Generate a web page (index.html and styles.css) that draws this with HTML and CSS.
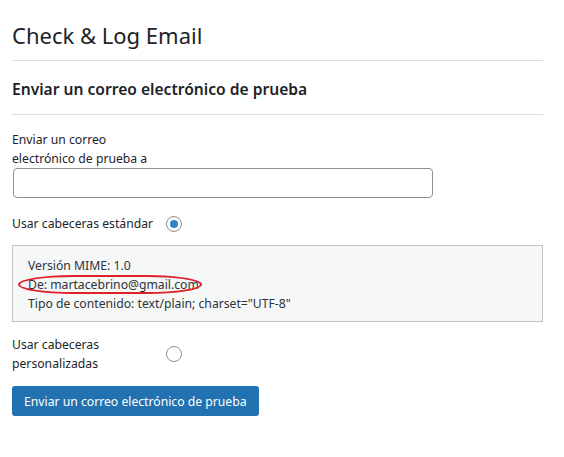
FILE: index.html
```html
<!DOCTYPE html>
<html lang="es">
<head>
    <meta charset="UTF-8">
    <title>Check &amp; Log Email</title>
    <link rel="stylesheet" href="styles.css">
</head>
<body>
    <div class="wrap">
        <h1 class="title">Check &amp; Log Email</h1>

        <h2 class="section-title">Enviar un correo electrónico de prueba</h2>

        <form class="test-form">
            <div class="field">
                <label for="sendTo" class="field-label">Enviar un correo<br>electrónico de prueba a</label>
                <input type="text" id="sendTo" class="text-input">
            </div>

            <div class="radio-row">
                <label for="stdHeaders" class="radio-label">Usar cabeceras estándar</label>
                <span class="radio checked" id="stdHeaders"></span>
            </div>

            <div class="headers-box">
                <div>Versión MIME: 1.0</div>
                <div class="marked">De: martacebrino@gmail.com</div>
                <div>Tipo de contenido: text/plain; charset="UTF-8"</div>
            </div>

            <div class="radio-row second">
                <label for="customHeaders" class="radio-label">Usar cabeceras<br>personalizadas</label>
                <span class="radio" id="customHeaders"></span>
            </div>

            <button type="submit" class="button">Enviar un correo electrónico de prueba</button>
        </form>
    </div>
</body>
</html>
```

FILE: styles.css
```css
body {
    margin: 0;
    padding: 0;
    background: #fff;
    color: #1d2327;
    font-family: "Noto Sans", sans-serif;
    font-size: 12.2px;
}
.wrap {
    width: 531px;
    padding: 0 0 0 12px;
}
.title {
    font-size: 22px;
    font-weight: 400;
    line-height: 30px;
    margin: 20px 0 0 0;
    padding-bottom: 10px;
    border-bottom: 1px solid #dcdcde;
}
.section-title {
    font-size: 15.6px;
    font-weight: 600;
    line-height: 22px;
    margin: 17px 0 0 0;
    padding-bottom: 14px;
    border-bottom: 1px solid #dcdcde;
}
.test-form {
    margin-top: 15px;
}
.field-label {
    display: block;
    line-height: 19px;
}
.text-input {
    display: block;
    box-sizing: border-box;
    width: 420px;
    height: 30px;
    margin: 0 0 0 1px;
    border: 1px solid #8c8f94;
    border-radius: 4px;
}
.radio-row {
    display: flex;
    align-items: center;
    margin-top: 16px;
}
.radio-row.second {
    margin-top: 13px;
}
.radio-label {
    width: 154px;
    line-height: 19px;
}
.radio {
    box-sizing: border-box;
    width: 16px;
    height: 16px;
    border: 1px solid #8c8f94;
    border-radius: 50%;
    display: flex;
    align-items: center;
    justify-content: center;
}
.radio.checked::before {
    content: "";
    width: 8px;
    height: 8px;
    border-radius: 50%;
    background: #3582c4;
}
.headers-box {
    margin-top: 12px;
    box-sizing: border-box;
    height: 77px;
    padding: 10px 15px;
    background: #f6f7f7;
    border: 1px solid #c3c4c7;
    color: #2c3338;
    line-height: 19px;
}
.marked {
    position: relative;
}
.marked::after {
    content: "";
    position: absolute;
    left: -10px;
    top: 0;
    width: 180px;
    height: 15px;
    border: 2px solid #e0202a;
    border-radius: 30% / 50%;
}
.button {
    display: block;
    margin-top: 13px;
    background: #2271b1;
    color: #fff;
    border: none;
    border-radius: 3px;
    height: 30px;
    padding: 0 12px;
    font-family: inherit;
    font-size: 12.2px;
}
```
